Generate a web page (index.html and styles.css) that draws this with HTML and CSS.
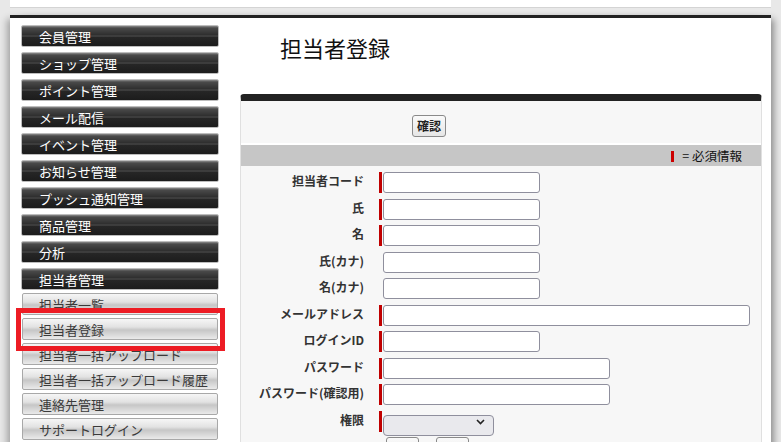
FILE: index.html
```html
<!DOCTYPE html>
<html lang="ja">
<head>
    <meta charset="UTF-8">
    <title>担当者登録</title>
    <link rel="stylesheet" href="styles.css">
</head>
<body>
    <div class="top-strip"></div>
    <div class="page">
        <div class="sidebar">
            <a class="menu-main" href="#">会員管理</a>
            <a class="menu-main" href="#">ショップ管理</a>
            <a class="menu-main" href="#">ポイント管理</a>
            <a class="menu-main" href="#">メール配信</a>
            <a class="menu-main" href="#">イベント管理</a>
            <a class="menu-main" href="#">お知らせ管理</a>
            <a class="menu-main" href="#">プッシュ通知管理</a>
            <a class="menu-main" href="#">商品管理</a>
            <a class="menu-main" href="#">分析</a>
            <a class="menu-main last" href="#">担当者管理</a>
            <a class="menu-sub" href="#">担当者一覧</a>
            <a class="menu-sub" href="#">担当者登録</a>
            <a class="menu-sub" href="#">担当者一括アップロード</a>
            <a class="menu-sub" href="#">担当者一括アップロード履歴</a>
            <a class="menu-sub" href="#">連絡先管理</a>
            <a class="menu-sub" href="#">サポートログイン</a>
        </div>
        <div class="main">
            <h1>担当者登録</h1>
            <div class="panel">
                <div class="panel-actions">
                    <button type="button" class="btn">確認</button>
                </div>
                <div class="panel-bar">
                    <span class="req-mark"></span>= 必須情報
                </div>
                <form class="form">
                    <div class="row">
                        <label>担当者コード</label>
                        <span class="mark req"></span>
                        <input type="text" class="w-short">
                    </div>
                    <div class="row">
                        <label>氏</label>
                        <span class="mark req"></span>
                        <input type="text" class="w-short">
                    </div>
                    <div class="row">
                        <label>名</label>
                        <span class="mark req"></span>
                        <input type="text" class="w-short">
                    </div>
                    <div class="row">
                        <label>氏(カナ)</label>
                        <span class="mark"></span>
                        <input type="text" class="w-short">
                    </div>
                    <div class="row">
                        <label>名(カナ)</label>
                        <span class="mark"></span>
                        <input type="text" class="w-short">
                    </div>
                    <div class="row">
                        <label>メールアドレス</label>
                        <span class="mark req"></span>
                        <input type="text" class="w-long">
                    </div>
                    <div class="row">
                        <label>ログインID</label>
                        <span class="mark req"></span>
                        <input type="text" class="w-short">
                    </div>
                    <div class="row">
                        <label>パスワード</label>
                        <span class="mark req"></span>
                        <input type="password" class="w-mid">
                    </div>
                    <div class="row">
                        <label>パスワード(確認用)</label>
                        <span class="mark req"></span>
                        <input type="password" class="w-mid">
                    </div>
                    <div class="row">
                        <label>権限</label>
                        <span class="mark req"></span>
                        <div class="select-wrap">
                            <select></select>
                            <svg class="chevron" width="9" height="6" viewBox="0 0 9 6"><path d="M1 1 L4.5 4.5 L8 1" fill="none" stroke="#222" stroke-width="1.6"/></svg>
                        </div>
                    </div>
                    <div class="row buttons">
                        <button type="button" class="btn small">&nbsp;</button>
                        <button type="button" class="btn small">&nbsp;</button>
                    </div>
                </form>
            </div>
        </div>
    </div>
    <div class="highlight"></div>
</body>
</html>
```
FILE: styles.css
```css
body {
    margin: 0;
    background: #e8e8e8;
    font-family: "Noto Sans CJK JP", "Noto Sans", sans-serif;
    color: #333;
    overflow: hidden;
}
.top-strip {
    margin: 0 10px;
    height: 7px;
    background: #fff;
    border-bottom: 1px solid #d4d4d4;
    box-shadow: 6px 0 6px -4px rgba(0, 0, 0, 0.3), -6px 0 6px -4px rgba(0, 0, 0, 0.3);
}
.page {
    margin: 7px 10px 0;
    background: #fff;
    border-top: 3px solid #222;
    box-shadow: 7px 0 7px -4px rgba(0, 0, 0, 0.4), -7px 0 7px -4px rgba(0, 0, 0, 0.3);
    display: flex;
    height: 600px;
}
.sidebar {
    width: 219px;
    padding: 7px 0 0 11px;
    display: flex;
    flex-direction: column;
}
.menu-main, .menu-sub {
    display: block;
    height: 22px;
    line-height: 21px;
    padding-left: 17px;
    font-size: 13px;
    text-decoration: none;
    box-sizing: border-box;
    white-space: nowrap;
}
.menu-main {
    width: 198px;
    margin-bottom: 5px;
    color: #fff;
    border: 1px solid #bdbdbd;
    border-radius: 2px;
    background: linear-gradient(#8a8a8a 0, #4a4a4a 2px, #2e2e2e 45%, #4c4c4c 50%, #262626 56%, #1c1c1c 100%);
}
.menu-main.last {
    margin-bottom: 3px;
}
.menu-sub {
    width: 196px;
    margin: 0 0 3px 1px;
    padding-left: 16px;
    color: #3a3a3a;
    border: 1px solid #a8a8a8;
    border-radius: 2px;
    background: linear-gradient(#f6f6f6 0, #e2e2e2 40%, #c6c6c6 55%, #dadada 80%, #eaeaea 100%);
}
.main {
    flex: 1;
    padding-right: 9px;
}
.main h1 {
    margin: 0;
    padding: 13px 0 0 40px;
    height: 63px;
    font-size: 22px;
    font-weight: normal;
    color: #111;
    line-height: 32px;
}
.panel {
    background: #f7f7f7;
    border: 1px solid #e0e0e0;
    border-top: 7px solid #222;
    border-radius: 4px 4px 0 0;
}
.panel-actions {
    height: 44px;
    padding-left: 171px;
    padding-top: 11px;
    box-sizing: border-box;
    border-bottom: 2px solid #fff;
}
.btn {
    height: 22px;
    padding: 0 4px;
    font-family: inherit;
    font-size: 12px;
    font-weight: bold;
    color: #222;
    border: 1px solid #8a8a8a;
    border-radius: 3px;
    background: linear-gradient(#fafafa, #e6e6e6);
    line-height: 18px;
}
.btn.small {
    width: 33px;
}
.panel-bar {
    height: 21px;
    background: #c6c6c6;
    text-align: right;
    padding-right: 19px;
    font-size: 12.5px;
    line-height: 21px;
    color: #111;
}
.req-mark {
    display: inline-block;
    width: 3px;
    height: 11px;
    background: #cc0000;
    vertical-align: -1px;
    margin-right: 8px;
}
.form {
    padding-top: 6px;
    display: flex;
    flex-direction: column;
    gap: 5.55px;
}
.row {
    display: flex;
    align-items: flex-start;
    height: 21px;
}
.row label {
    width: 123px;
    text-align: right;
    font-size: 12px;
    font-weight: bold;
    color: #333;
    line-height: 16px;
    padding-top: 1px;
    white-space: nowrap;
}
.mark {
    width: 3px;
    height: 21px;
    margin: 0 1px 0 15px;
}
.mark.req {
    background: #c00000;
}
.row input {
    height: 21px;
    box-sizing: border-box;
    border: 1px solid #8f8f9d;
    border-radius: 3px;
    background: #fff;
    margin: 0;
}
.w-short {
    width: 157px;
}
.w-mid {
    width: 227px;
}
.w-long {
    width: 367px;
}
.select-wrap {
    position: relative;
    width: 111px;
    height: 21px;
}
.select-wrap select {
    appearance: none;
    width: 111px;
    height: 21px;
    border: 1px solid #8f8f9d;
    border-radius: 4px;
    background: #e9e9ed;
    margin: 0;
}
.chevron {
    position: absolute;
    right: 9px;
    top: 8px;
}
.row.buttons {
    padding-left: 145px;
    gap: 17px;
}
.highlight {
    position: absolute;
    left: 16px;
    top: 308px;
    width: 199px;
    height: 33px;
    border: 5px solid #ed1c24;
}
```
